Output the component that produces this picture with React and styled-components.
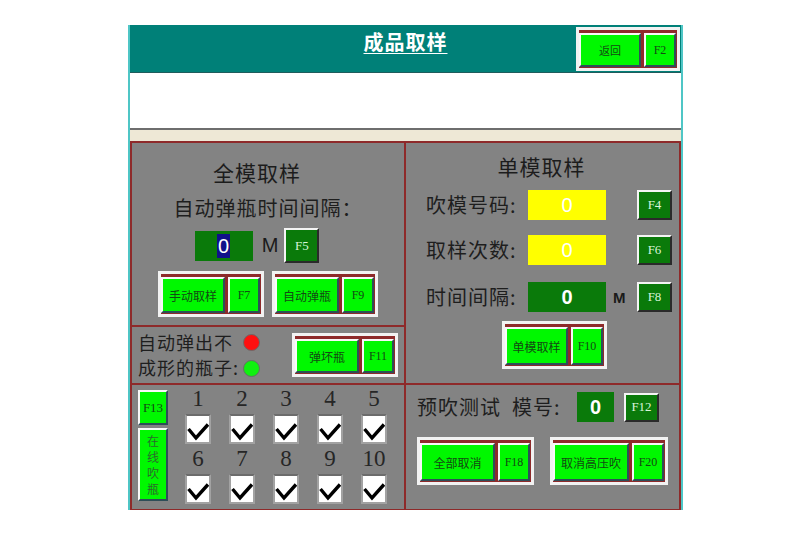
import React from "react";
import styled, { createGlobalStyle } from "styled-components";

const Global = createGlobalStyle`
  html, body { margin: 0; padding: 0; background: #fff; }
  body { font-family: "Noto Sans CJK SC", "Liberation Sans", sans-serif; }
`;

const CJK = `"Noto Sans CJK SC", "Liberation Sans", sans-serif`;
const SERIF = `"Liberation Serif", "Noto Sans CJK SC", serif`;
const RED = "#8e2a2a";

const Screen = styled.div`
  box-sizing: border-box;
  margin: 25px 0 0 128px;
  width: 555px;
  height: 485px;
  display: flex;
  flex-direction: column;
  border-left: 2px solid #4fc6c6;
  border-right: 2px solid #4fc6c6;
`;

const Header = styled.div`
  height: 47px;
  background: #008078;
  display: grid;
  grid-template-columns: 1fr auto 1fr;
  align-items: start;
`;

const Title = styled.div`
  grid-column: 2;
  color: #fff;
  font-family: ${CJK};
  font-size: 20px;
  font-weight: 700;
  text-decoration: underline;
  text-decoration-thickness: 1px;
  text-underline-offset: 3px;
  letter-spacing: 1px;
  padding-top: 3px;
  line-height: 28px;
`;

const HeaderRight = styled.div`
  grid-column: 3;
  justify-self: end;
  padding: 2px 1px 0 0;
`;

const MessageArea = styled.div`
  height: 55px;
  background: #fff;
  border-top: 1px solid #1f5c5c;
  border-bottom: 2px solid #6e6e6e;
`;

const Strip = styled.div`
  height: 11px;
  background: #eee8d6;
`;

const Body = styled.div`
  flex: 1;
  display: grid;
  grid-template-columns: 274px 1fr;
  background: #838383;
  border: 2px solid ${RED};
  border-bottom-width: 1px;
`;

const Column = styled.div`
  display: flex;
  flex-direction: column;
  border-right: ${(p) => (p.$divider ? `2px solid ${RED}` : "none")};
`;

const Section = styled.div`
  box-sizing: border-box;
  height: ${(p) => (p.$h ? `${p.$h}px` : "auto")};
  flex: ${(p) => (p.$h ? "none" : "1")};
  border-bottom: ${(p) => (p.$last ? "none" : `2px solid ${RED}`)};
  display: flex;
  flex-direction: ${(p) => p.$dir || "column"};
  align-items: ${(p) => p.$align || "center"};
  padding: ${(p) => p.$pad || "0"};
`;

const Heading = styled.div`
  font-family: ${CJK};
  font-size: 21px;
  line-height: 28px;
  color: #1c1c1c;
  letter-spacing: 1px;
  margin-right: ${(p) => p.$mr || 0}px;
`;

const Label = styled.div`
  font-family: ${CJK};
  font-size: ${(p) => p.$size || 19}px;
  line-height: ${(p) => p.$lh || 26}px;
  color: #1e1e1e;
  letter-spacing: 1px;
  white-space: nowrap;
  width: ${(p) => (p.$w ? `${p.$w}px` : "auto")};
`;

const Row = styled.div`
  display: flex;
  align-items: center;
  gap: ${(p) => p.$gap || 0}px;
  margin-top: ${(p) => p.$mt || 0}px;
  margin-left: ${(p) => p.$ml || 0}px;
  margin-right: ${(p) => p.$mr || 0}px;
`;

const ValueBox = styled.div`
  box-sizing: border-box;
  width: ${(p) => p.$w}px;
  height: ${(p) => p.$h || 30}px;
  background: ${(p) => (p.$yellow ? "#ffff00" : "#0a7a0a")};
  color: #fff;
  display: flex;
  align-items: center;
  justify-content: center;
  font-family: "Liberation Sans", sans-serif;
  font-size: 20px;
  font-weight: ${(p) => (p.$bold ? 700 : 400)};
`;

const Selected = styled.span`
  background: #10108a;
  color: #fff;
  padding: 0 1px;
  line-height: 24px;
`;

const Unit = styled.span`
  font-family: "Liberation Sans", sans-serif;
  font-size: ${(p) => p.$size || 19}px;
  font-weight: ${(p) => (p.$bold ? 700 : 400)};
  color: #1a1a1a;
  width: ${(p) => (p.$w ? `${p.$w}px` : "auto")};
  margin-left: ${(p) => p.$ml || 0}px;
`;

const FKey = styled.div`
  box-sizing: border-box;
  width: ${(p) => p.$w || 35}px;
  height: ${(p) => p.$h || 30}px;
  margin-left: ${(p) => p.$ml || 0}px;
  background: #0a7a0a;
  border-top: 2px solid #f4f4f4;
  border-left: 2px solid #f4f4f4;
  border-bottom: 2px solid #2a2a2a;
  border-right: 2px solid #2a2a2a;
  color: #d9f5d9;
  font-family: ${SERIF};
  font-size: 13px;
  display: flex;
  align-items: center;
  justify-content: center;
`;

const PairFrame = styled.div`
  display: flex;
  gap: 3px;
  background: ${RED};
  border: 3px solid #f2f2f2;
  padding: 3px 1px 1px 0;
`;

const GreenBtn = styled.div`
  box-sizing: border-box;
  width: ${(p) => p.$w}px;
  height: ${(p) => p.$h || 36}px;
  background: #00f800;
  border-top: 2px solid #f8f8f8;
  border-left: 2px solid #f8f8f8;
  border-bottom: 2px solid #2e4e58;
  border-right: 2px solid #2e4e58;
  color: #134a13;
  font-family: ${(p) => (p.$serif ? SERIF : CJK)};
  font-size: ${(p) => p.$size || 12}px;
  display: flex;
  align-items: center;
  justify-content: center;
  white-space: nowrap;
`;

const Pair = ({ label, fk, w1, w2, h, size = 12 }) => (
  <PairFrame>
    <GreenBtn $w={w1} $h={h} $size={size}>{label}</GreenBtn>
    <GreenBtn $w={w2} $h={h} $serif $size={12}>{fk}</GreenBtn>
  </PairFrame>
);

const Lamp = styled.div`
  width: 15px;
  height: 15px;
  border-radius: 50%;
  background: ${(p) => p.$color};
  border: 1px solid #6a6a6a;
`;

const LampCol = styled.div`
  display: flex;
  flex-direction: column;
  gap: 9px;
  margin-left: 4px;
`;

const SideKeys = styled.div`
  display: flex;
  flex-direction: column;
  gap: 3px;
`;

const SideBtn = styled(GreenBtn)`
  flex-direction: column;
  line-height: 16px;
  font-size: 12px;
  color: #2c6a2c;
`;

const CheckGrid = styled.div`
  display: grid;
  grid-template-columns: repeat(5, 44px);
  justify-items: center;
  margin-left: 8px;
  margin-top: -4px;
`;

const Num = styled.div`
  font-family: ${SERIF};
  font-size: 23px;
  line-height: 26px;
  color: #262626;
`;

const Check = styled.div`
  box-sizing: border-box;
  width: 26px;
  height: 30px;
  background: #fff;
  border: 2px solid #a2a2a2;
  border-top-color: #6c6c6c;
  display: flex;
  align-items: flex-end;
  justify-content: center;
  margin: 2px 0 2px;
  overflow: hidden;
`;

const CheckMark = () => (
  <svg width="22" height="22" viewBox="0 0 22 22">
    <path d="M1.5 9 L9 18 L21 4.5" fill="none" stroke="#000" strokeWidth="3.4" />
  </svg>
);

const Spacer = styled.div`
  flex: 1;
`;

export default function App() {
  return (
    <>
      <Global />
      <Screen>
        <Header>
          <Title>成品取样</Title>
          <HeaderRight>
            <Pair label="返回" fk="F2" w1={62} w2={32} h={34} size={11} />
          </HeaderRight>
        </Header>
        <MessageArea />
        <Strip />
        <Body>
          <Column $divider>
            <Section $h={184} $pad="15px 0 0 0">
              <Heading $mr={22}>全模取样</Heading>
              <Label $size={20} style={{ marginTop: 9 }}>自动弹瓶时间间隔：</Label>
              <Row $mt={7} $mr={22}>
                <ValueBox $w={58} $h={30}>
                  <Selected>0</Selected>
                </ValueBox>
                <Unit $size={20} $ml={9}>M</Unit>
                <FKey $w={35} $h={35} $ml={6}>F5</FKey>
              </Row>
              <Row $gap={8} $mt={8}>
                <Pair label="手动取样" fk="F7" w1={64} w2={32} h={36} />
                <Pair label="自动弹瓶" fk="F9" w1={64} w2={32} h={36} />
              </Row>
            </Section>
            <Section $h={58} $dir="row" $pad="0 6px 0 6px">
              <div>
                <Label $size={18} $lh={25}>自动弹出不</Label>
                <Label $size={18} $lh={25}>成形的瓶子:</Label>
              </div>
              <LampCol>
                <Lamp $color="#ff1010" />
                <Lamp $color="#10f010" />
              </LampCol>
              <Spacer />
              <Pair label="弹坏瓶" fk="F11" w1={64} w2={32} h={34} />
            </Section>
            <Section $last $dir="row" $align="flex-start" $pad="5px 0 0 6px">
              <SideKeys>
                <GreenBtn $w={30} $h={35} $serif $size={13}>F13</GreenBtn>
                <SideBtn $w={30} $h={73}>
                  <span>在</span><span>线</span><span>吹</span><span>瓶</span>
                </SideBtn>
              </SideKeys>
              <CheckGrid>
                {[1, 2, 3, 4, 5].map((n) => <Num key={n}>{n}</Num>)}
                {[1, 2, 3, 4, 5].map((n) => <Check key={`a${n}`}><CheckMark /></Check>)}
                {[6, 7, 8, 9, 10].map((n) => <Num key={n}>{n}</Num>)}
                {[6, 7, 8, 9, 10].map((n) => <Check key={`b${n}`}><CheckMark /></Check>)}
              </CheckGrid>
            </Section>
          </Column>
          <Column>
            <Section $h={242} $align="flex-start" $pad="9px 0 0 20px">
              <Heading style={{ alignSelf: "center", marginRight: 22 }}>单模取样</Heading>
              <Row $mt={10}>
                <Label $size={20} $w={102}>吹模号码:</Label>
                <ValueBox $w={78} $yellow>0</ValueBox>
                <FKey $ml={31}>F4</FKey>
              </Row>
              <Row $mt={15}>
                <Label $size={20} $w={102}>取样次数:</Label>
                <ValueBox $w={78} $yellow>0</ValueBox>
                <FKey $ml={31}>F6</FKey>
              </Row>
              <Row $mt={17}>
                <Label $size={20} $w={102}>时间间隔:</Label>
                <ValueBox $w={78} $bold>0</ValueBox>
                <Unit $bold $size={15} $ml={7} $w={24}>M</Unit>
                <FKey>F8</FKey>
              </Row>
              <Row $mt={9} $ml={76}>
                <Pair label="单模取样" fk="F10" w1={63} w2={32} h={38} />
              </Row>
            </Section>
            <Section $last $align="flex-start" $pad="7px 0 0 11px">
              <Row>
                <Label $size={20} $w={160}>预吹测试&nbsp;&nbsp;模号:</Label>
                <ValueBox $w={37} $h={30} $bold>0</ValueBox>
                <FKey $w={35} $h={29} $ml={10}>F12</FKey>
              </Row>
              <Row $gap={16} $mt={15}>
                <Pair label="全部取消" fk="F18" w1={75} w2={32} h={38} />
                <Pair label="取消高压吹" fk="F20" w1={76} w2={32} h={38} />
              </Row>
            </Section>
          </Column>
        </Body>
      </Screen>
    </>
  );
}
